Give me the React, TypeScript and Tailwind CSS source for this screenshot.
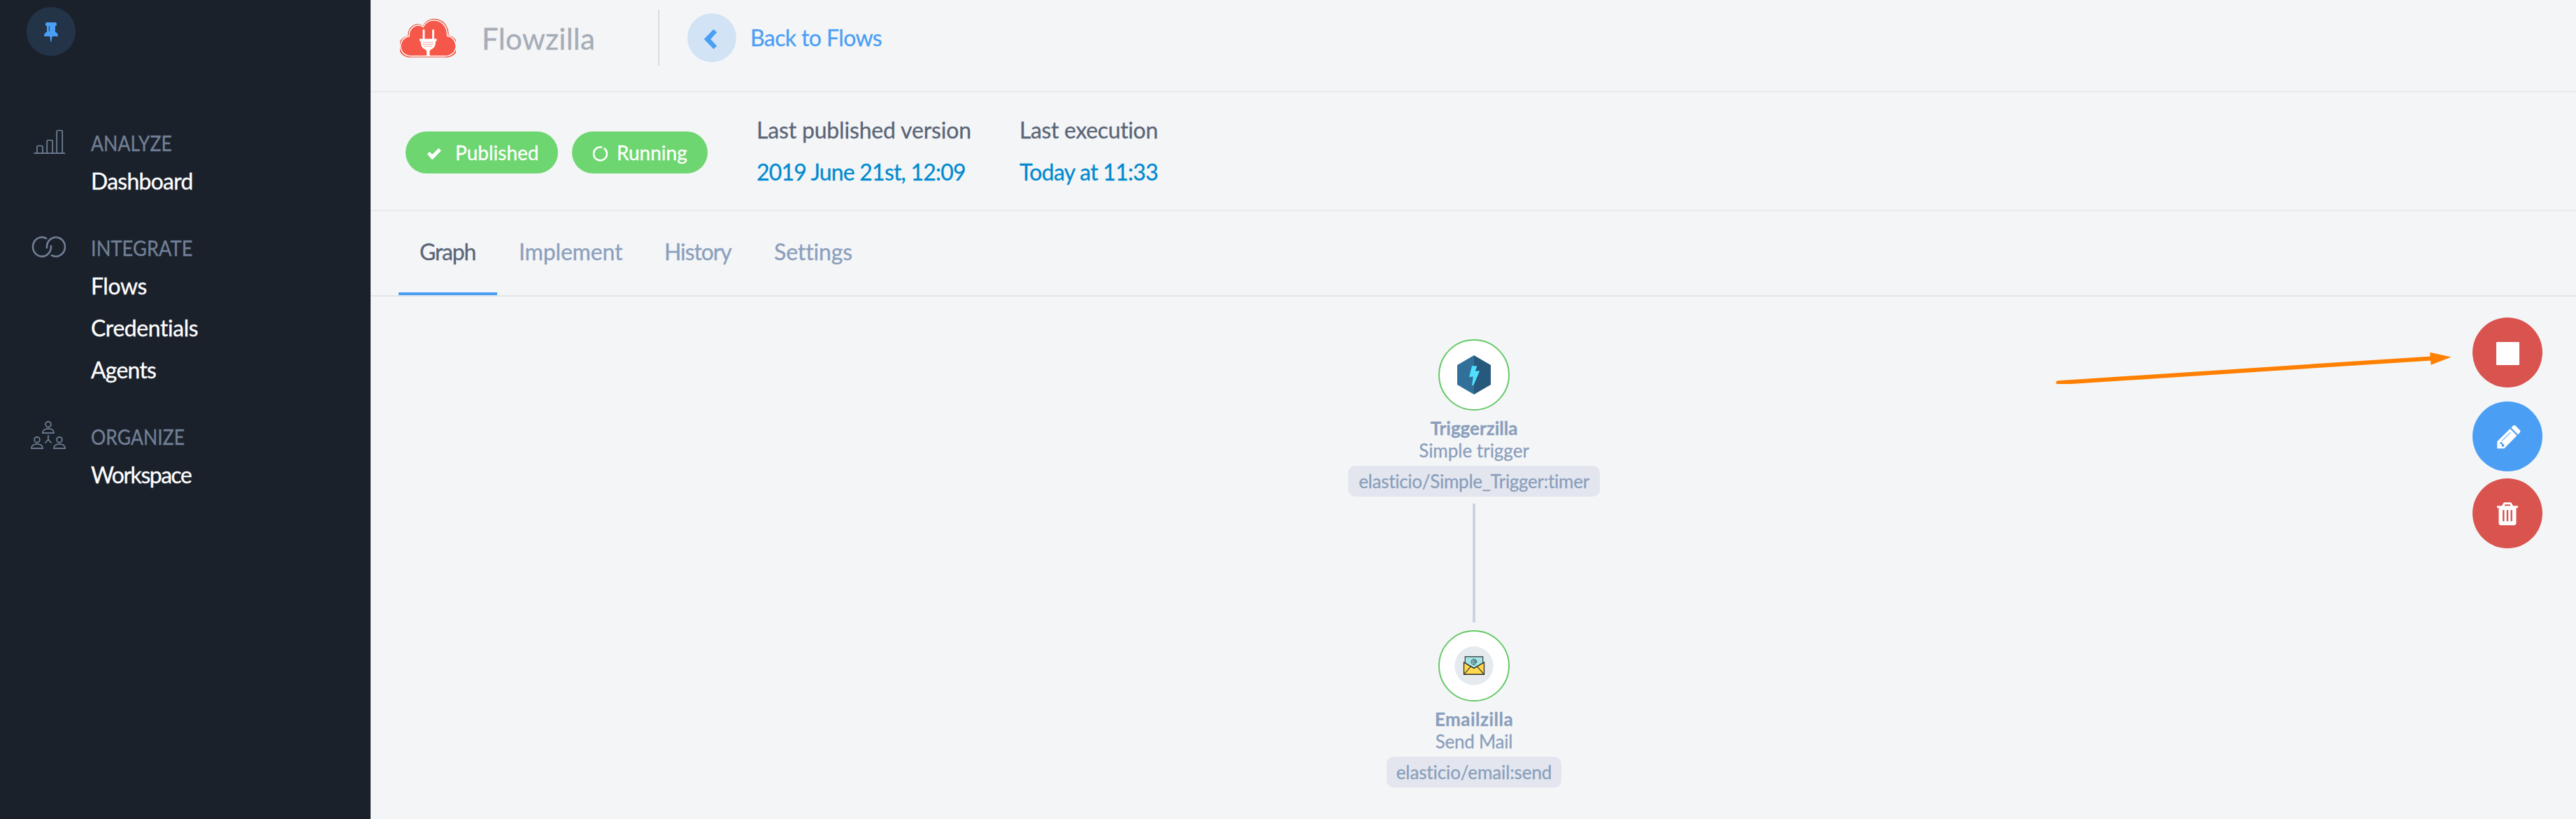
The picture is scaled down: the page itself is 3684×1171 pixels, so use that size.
import type { ReactNode } from "react";

function PinIcon() {
  return (
    <svg width="20" height="28" viewBox="0 0 20 28" className="mt-[2px] fill-[#4a9ff5]">
      <path d="M4 0h12a2 2 0 0 1 2 2v1.200a2 2 0 0 1-2 2v8.200c2.600 1.200 4 3.300 4 6.600h-8.400L10.300 28h-.8L8.400 20H0c0-3.300 1.400-5.400 4-6.600V5.200a2 2 0 0 1-2-2V2a2 2 0 0 1 2-2z" />
      <path d="M7.300 5v8" className="stroke-[#233449]" strokeWidth="1" />
    </svg>
  );
}

function BarsIcon() {
  return (
    <svg width="50" height="40" viewBox="0 0 50 40" fill="none" stroke="#718096" strokeWidth="1.700" strokeLinecap="round">
      <path d="M5 37.200h43.500M9 37V28a1.500 1.500 0 0 1 1.500-1.500h5A1.500 1.500 0 0 1 17 28v9M23.200 37V20a1.500 1.500 0 0 1 1.500-1.500h5a1.500 1.500 0 0 1 1.500 1.500v17M37.200 37V6a1.500 1.500 0 0 1 1.500-1.500h5A1.500 1.500 0 0 1 45.200 6v31" />
    </svg>
  );
}

function RingsIcon() {
  return (
    <svg width="50" height="40" viewBox="0 0 50 40" fill="none" stroke="#718096" strokeWidth="2.600" strokeLinecap="round">
      <path d="M22.200 8.900A13 13.700 0 1 0 29 21V19.700" />
      <path d="M30 33.100A13 13.700 0 1 0 23 21V22.300" />
    </svg>
  );
}

function Person({ x, y }: { x: number; y: number }) {
  return (
    <g transform={`translate(${x} ${y})`}>
      <circle cx="9" cy="4.700" r="3.900" />
      <path d="M.9 17.200C.9 13 4.500 10.800 9 10.800s8.100 2.200 8.100 6.400z" />
    </g>
  );
}

function PeopleIcon() {
  return (
    <svg width="50" height="40" viewBox="0 0 50 40" fill="none" stroke="#718096" strokeWidth="1.700">
      <Person x={16} y={0} />
      <Person x={0} y={22} />
      <Person x={32} y={22} />
      <path d="M25 20v6.500l-4.600 5M25 26.500l4.600 5" />
    </svg>
  );
}

function CloudLogo() {
  const cloud = "M16 56.500A14.500 14.500 0 0 1 12 26.500C11 15 22 5.500 33 12.500C41 -4.500 70 0 69 26A14.800 14.800 0 0 1 64.500 56.500Z";
  return (
    <svg width="80" height="58" viewBox="0 0 80 58">
      <path d={cloud} fill="#f5574a" stroke="#e4543f" strokeWidth="1.200" />
      <path d={cloud} fill="#f5574a" stroke="#fff" strokeWidth="1.500" transform="translate(1.900 1.500) scale(.952 .95)" />
      <path d="M34 18.500v12M47.500 18.500v12" stroke="#fff" strokeWidth="2.800" strokeLinecap="round" />
      <path d="M28 30.500h24.500v3.200h-1.500c0 6-1.500 9.500-5 11.200-2.200 1.200-3.500 2-3.500 4.300V55h-4.300v-5.800c0-2.300-1.300-3.100-3.500-4.300-3.500-1.700-5-5.200-5-11.200H28z" fill="#fff" />
      <path d="M32.500 35.800h15.300M32.500 38.500h15.300M34 41.200h12.300" stroke="#f9a8a0" strokeWidth="1.100" />
    </svg>
  );
}

function TriggerIcon() {
  return (
    <svg width="48" height="56" viewBox="0 0 48 56">
      <path d="M24 0v56L0 42V14z" fill="#30709a" />
      <path d="M24 0v56l24-14V14z" fill="#27597c" />
      <path d="M24 43.500L33 23.500 27.500 24 28.500 16z" fill="#1f4a68" />
      <path d="M21 15.300h7.300L26 22.600h6.300L23.400 43h-2.300l1.700-12.500-5.800.6z" fill="#52dfff" />
    </svg>
  );
}

function MailIcon() {
  return (
    <svg width="56" height="56" viewBox="0 0 56 56">
      <circle cx="28" cy="28" r="27.700" fill="#e4eaee" />
      <path d="M12 22l2-.5V13.500h28v8l2 .5v19H12z" fill="#fff" />
      <path d="M13.500 23v17.300h29V23L28 31.500z" fill="#ffd84d" stroke="#2f2f2f" strokeWidth="1.400" />
      <path d="M15.200 14.800h25.600v8.900L28 31.300l-12.800-7.600z" fill="#a5e4e6" stroke="#2f2f2f" strokeWidth="1.200" />
      <path d="M13.500 40.300l9.700-11.200M42.500 40.300l-9.700-11.200" stroke="#2f2f2f" strokeWidth="1.100" />
      <circle cx="27.900" cy="22.300" r="1.800" fill="none" stroke="#24424a" strokeWidth="1" />
      <path d="M29.800 20.300v2.800c0 1.600 2 1.300 2-.8a3.900 3.900 0 1 0-1.500 3.200" fill="none" stroke="#24424a" strokeWidth="1" />
    </svg>
  );
}

function PencilIcon() {
  return (
    <svg width="34" height="34" viewBox="0 0 34 34" className="ml-[3px] mt-[2px]">
      <path d="M.3 33.300v-10L18.700 5 28.500 14.800 10.300 33.300zM20.300 3.500L22.800 1Q24.800-.8 26.800 1L32.500 6.800Q34.300 8.800 32.500 10.800L30 13.300z" fill="#fff" />
      <path d="M7 22.500L19.500 10.200" stroke="#7dbaf8" strokeWidth="1.200" />
      <path d="M3.300 26l2-2 2.300.6.500 2.200 2 .4.200 2.500-1.700 1.500-2-1.800.2-2.200-1.700-1z" fill="#4a9ff5" />
    </svg>
  );
}

function TrashIcon() {
  return (
    <svg width="30" height="34" viewBox="0 0 30 34" className="mt-[2px]">
      <path
        d="M0 5.300h7L9 1.500Q9.700.3 11 .3h8q1.300 0 2 1.200l2 3.800h7v3h-2.500v21.500q0 3-3 3.200h-19q-3-.2-3-3.200V8.300H0zM10.500 5.300h9l-1-2h-7z"
        fill="#fff"
        fillRule="evenodd"
      />
      <path d="M9.300 11.300v16M15 11.300v16M20.700 11.300v16" stroke="#d9534f" strokeWidth="2.400" />
    </svg>
  );
}

function Section({ icon, title, children }: { icon: ReactNode; title: ReactNode; children: ReactNode }) {
  return (
    <section className="flex">
      <div className="-mt-[5px] w-[130px] shrink-0 pl-11">{icon}</div>
      <div>
        <h2 className="mb-2 text-[30px] leading-[34px] text-[#718096]">{title}</h2>
        <ul className="text-[32px] leading-[60px] text-white">{children}</ul>
      </div>
    </section>
  );
}

function FlowNode({ icon, title, subtitle, tag }: { icon: ReactNode; title: ReactNode; subtitle: ReactNode; tag: ReactNode }) {
  return (
    <div className="flex flex-col items-center text-[26px] leading-[32px] text-[#8a9fbc]">
      <div className="mb-[9px] flex size-[102px] items-center justify-center rounded-full border-2 border-[#66c967] bg-white">{icon}</div>
      <div className="font-bold">{title}</div>
      <div>{subtitle}</div>
      {tag}
    </div>
  );
}

export default function App() {
  return (
    <div className="flex h-[1171px] w-[3684px] overflow-hidden bg-[#f4f5f7] font-['Lato','Open_Sans',sans-serif] whitespace-nowrap [-webkit-text-stroke:0.3px] [font-variant-ligatures:none]">
      <aside className="w-[530px] shrink-0 bg-[#1b212b]">
        <div className="px-[38px] pt-[10px] pb-[107px]">
          <div className="flex size-[70px] items-center justify-center rounded-full bg-[#233449]">
            <PinIcon />
          </div>
        </div>
        <nav className="flex flex-col gap-12">
          <Section icon={<BarsIcon />} title={<span className="inline-block origin-left scale-x-[0.89]">ANALYZE</span>}>
            <li className="tracking-[-0.75px]">Dashboard</li>
          </Section>
          <Section icon={<RingsIcon />} title={<span className="inline-block origin-left scale-x-[0.91]">INTEGRATE</span>}>
            <li className="tracking-[-0.44px]">Flows</li>
            <li className="tracking-[-0.44px]">Credentials</li>
            <li className="tracking-[-0.8px]">Agents</li>
          </Section>
          <Section icon={<PeopleIcon />} title={<span className="inline-block origin-left scale-x-[0.886]">ORGANIZE</span>}>
            <li className="tracking-[-1.5px]">Workspace</li>
          </Section>
        </nav>
      </aside>

      <main className="flex flex-1 flex-col">
        <header className="flex h-[132px] items-center border-b-2 border-[#e8eaec] pb-[22px] pl-[42px]">
          <CloudLogo />
          <div className="ml-[37px] w-[252px] pt-[2px] text-[42px] leading-[50px] tracking-[0.3px] text-[#a5adb6]">Flowzilla</div>
          <div className="h-20 w-[2px] bg-[#d9dce1]" />
          <a className="ml-10 flex items-center text-[#4a9ff5]">
            <span className="flex size-[70px] items-center justify-center rounded-full bg-[#d2e3f5]">
              <svg width="20" height="30" viewBox="0 0 20 30" className="mt-[4px] mr-[4px] fill-[#4a9ff5]">
                <path d="M14.500.8L19.200 5.300 10.300 15l8.900 9.700-4.700 4.500L.8 15z" />
              </svg>
            </span>
            <span className="ml-5 text-[32px] tracking-[-0.6px]">Back to Flows</span>
          </a>
        </header>

        <div className="flex h-[170px] items-center border-b-2 border-[#e8eaec] pl-[50px]">
          <div className="mt-1 flex gap-5 text-[28px] text-white">
            <div className="flex h-[60px] w-[218px] items-center rounded-full bg-[#6dd670] pl-[30px]">
              <svg width="22" height="18" viewBox="0 0 22 18" className="mt-1 mr-[19px] fill-white">
                <path d="M1 9.300L4.200 6 8.300 9.800 17.500.8 21 4.200 8.800 17 7.600 17z" />
              </svg>
              Published
            </div>
            <div className="flex h-[60px] w-[194px] items-center rounded-full bg-[#6dd670] pl-[30px]">
              <svg width="22" height="22" viewBox="0 0 22 22" className="mt-1 mr-[12px]" fill="none" stroke="#fff" strokeWidth="2.600">
                <path d="M15.500 2.800A9.500 9.500 0 1 1 13 1.700" />
              </svg>
              Running
            </div>
          </div>
          <dl className="ml-[70px] flex text-[32px] leading-[60px]">
            <div className="w-[376px]">
              <dt className="tracking-[-0.18px] text-[#5a6577]">Last published version</dt>
              <dd className="tracking-[-0.8px] text-[#008acf]">2019 June 21st, 12:09</dd>
            </div>
            <div>
              <dt className="tracking-[-0.36px] text-[#5a6577]">Last execution</dt>
              <dd className="tracking-[-0.72px] text-[#008acf]">Today at 11:33</dd>
            </div>
          </dl>
        </div>

        <nav className="flex h-[122px] items-stretch border-b-2 border-[#e3e5e9] pl-10 text-[32px] leading-[116px] text-[#8a9fbc]">
          <div className="w-[141px] border-b-4 border-[#4a9ff5] pl-[30px] tracking-[-1.2px] text-[#5a6577]">Graph</div>
          <div className="w-[209px] pl-[31px] tracking-[-0.16px]">Implement</div>
          <div className="w-[158px] pl-[30px] tracking-[-1.1px]">History</div>
          <div className="pl-[29px] tracking-[-0.12px]">Settings</div>
        </nav>

        <div className="relative flex-1">
          <div className="flex flex-col items-center pt-[61px] pl-[2px]">
            <FlowNode
              icon={<TriggerIcon />}
              title="Triggerzilla"
              subtitle="Simple trigger"
              tag={
                <div className="mt-[6px] h-11 w-[360px] rounded-[10px] bg-[#e3e6ee] text-center leading-[44px] tracking-[-0.26px]">
                  elasticio/Simple_Trigger:timer
                </div>
              }
            />
            <div className="mt-[10px] mb-[11px] h-[170px] w-1 bg-[#ccd3e0]" />
            <FlowNode
              icon={<MailIcon />}
              title={<span className="tracking-[0.48px]">Emailzilla</span>}
              subtitle={<span className="tracking-[-0.24px]">Send Mail</span>}
              tag={
                <div className="mt-[6px] h-11 w-[250px] rounded-[10px] bg-[#e3e6ee] text-center leading-[44px] tracking-[-0.1px]">
                  elasticio/email:send
                </div>
              }
            />
          </div>

          <svg width="574" height="54" viewBox="0 0 574 54" className="absolute top-[71px] left-[2404px]">
            <path d="M9.500 52.500L543 17.700" transform="translate(0 -.3)" stroke="#ff8000" strokeWidth="6" strokeLinecap="round" />
            <path d="M541.200 8.700L571.500 15.500 542.500 26.700z" fill="#ff8000" />
          </svg>

          <div className="absolute top-[30px] right-12 flex flex-col items-center">
            <button className="flex size-[100px] items-center justify-center rounded-full bg-[#d9534f]">
              <span className="mt-[3px] size-[33px] rounded-[1px] bg-white" />
            </button>
            <button className="mt-5 flex size-[100px] items-center justify-center rounded-full bg-[#4a9ff5]">
              <PencilIcon />
            </button>
            <button className="mt-[10px] flex size-[100px] items-center justify-center rounded-full bg-[#d9534f]">
              <TrashIcon />
            </button>
          </div>
        </div>
      </main>
    </div>
  );
}
